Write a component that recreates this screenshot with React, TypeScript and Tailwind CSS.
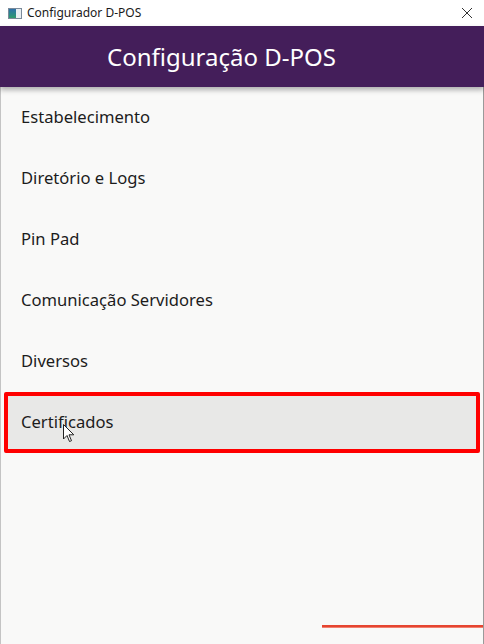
const items = [
  "Estabelecimento",
  "Diretório e Logs",
  "Pin Pad",
  "Comunicação Servidores",
  "Diversos",
  "Certificados",
];

function Cursor() {
  return (
    <svg
      width="12"
      height="19"
      viewBox="0 0 12 19"
      className="absolute left-[63px] top-[424px]"
    >
      <path
        d="M0.5 0.5 L0.5 15 L4 11.5 L6.5 17.5 L8.5 16.7 L6 10.8 L10.8 10.8 Z"
        fill="#fff"
        stroke="#222"
        strokeWidth="1"
      />
    </svg>
  );
}

export default function App() {
  return (
    <div
      className="relative flex h-[644px] w-[484px] flex-col overflow-hidden bg-[#f9f9f8]"
      style={{ fontFamily: '"Noto Sans", "Open Sans", sans-serif' }}
    >
      <div className="flex h-[26px] items-center bg-white pl-[8px] pr-[11px]">
        <div className="mr-[5px] flex h-[11px] w-[14px] border border-[#7a8a9a] bg-[#e8eef2]">
          <div className="h-full w-[7px] bg-gradient-to-b from-[#2f6fa8] to-[#2f9a6a]" />
        </div>
        <span className="text-[12px] text-[#1a1a1a]">Configurador D-POS</span>
        <svg width="12" height="12" viewBox="0 0 12 12" className="ml-auto">
          <path d="M1 1 L11 11 M11 1 L1 11" stroke="#333" strokeWidth="1" />
        </svg>
      </div>

      <div className="relative z-10 flex h-[61px] items-center bg-[#441e5a] pl-[107px] shadow-[0_3px_5px_rgba(0,0,0,0.3)]">
        <span className="text-[24px] text-white">Configuração D-POS</span>
      </div>

      <div className="flex flex-1 flex-col border-x border-x-[#9a9a9a] border-l-[#c4c4c4]">
        {items.map((label, i) => {
          const selected = i === items.length - 1;
          return (
            <div
              key={label}
              className={
                selected
                  ? "mx-[3px] flex h-[61px] items-center rounded-[2px] border-[4px] border-[#ff0000] bg-[#e8e8e7] pl-[13px]"
                  : "flex h-[61px] items-center pl-[20px]"
              }
            >
              <span className="text-[16.6px] text-[#1c1c1c]">{label}</span>
            </div>
          );
        })}
        <div className="mt-auto mb-[16px] ml-auto h-[3px] w-[161px] border-b border-b-[#f08070] bg-[#e64530]" />
      </div>
      <Cursor />
    </div>
  );
}
